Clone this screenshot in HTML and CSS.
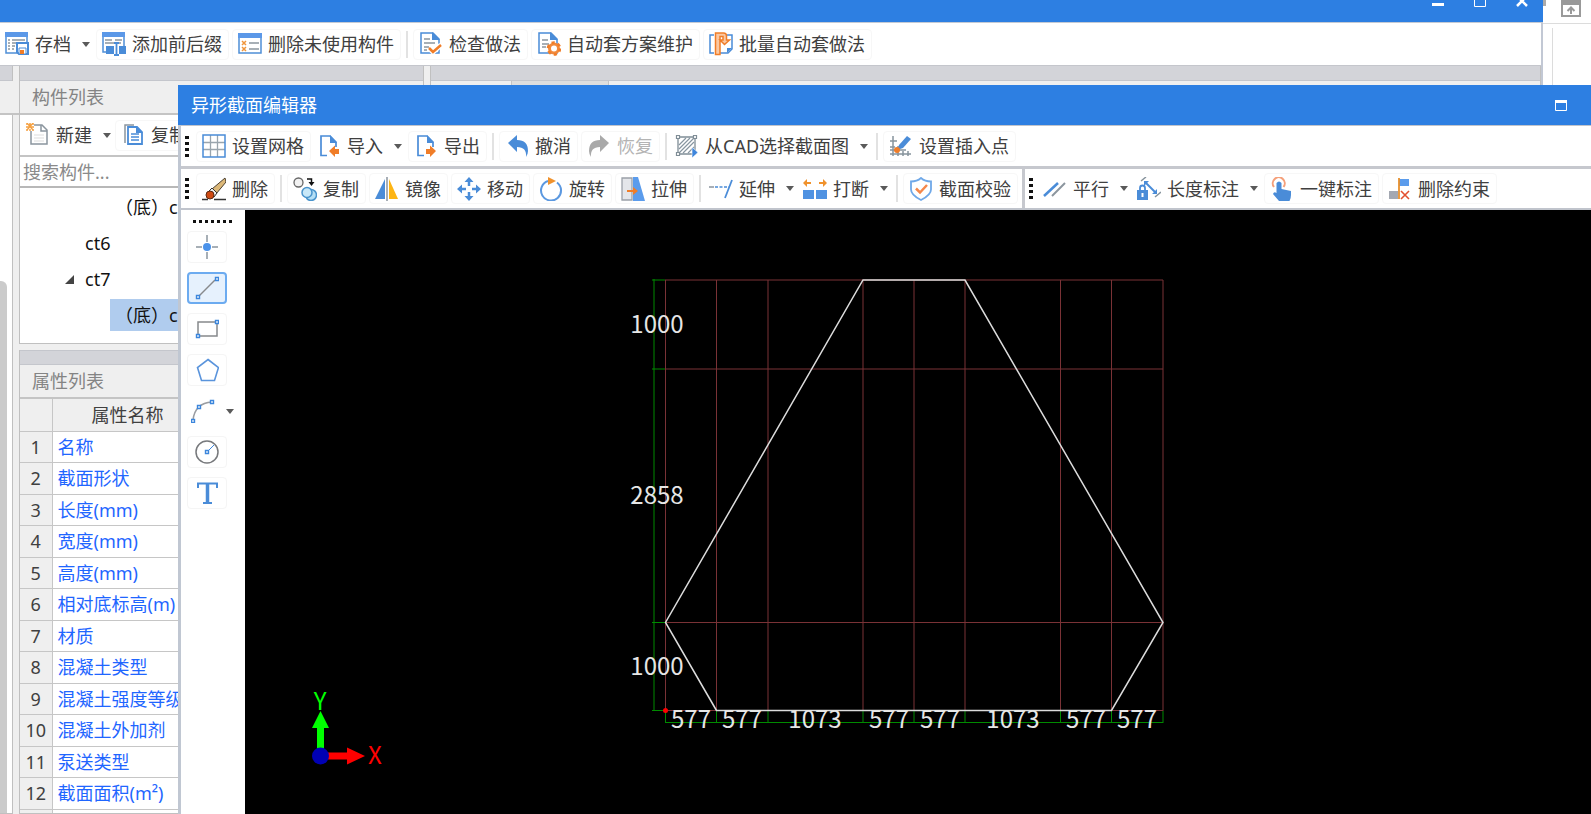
FILE: index.html
```
<!DOCTYPE html>
<html lang="zh-CN">
<head>
<meta charset="utf-8">
<title>异形截面编辑器</title>
<link rel="stylesheet" href="styles.css">
</head>
<body>
<div class="desktop">
  <div class="main-row">
    <main class="manager">
      <header class="manager-title">
        <button class="win-btn" aria-label="最小化"><svg width="12" height="14"><path d="M0 11.500h12" stroke="#fff" stroke-width="3"/></svg></button>
        <button class="win-btn" aria-label="最大化"><svg width="12" height="14"><path d="M.5 0v13.500h11V0" fill="none" stroke="#fff"/></svg></button>
        <button class="win-btn" aria-label="关闭"><svg width="12" height="14"><path d="M1 3l10 10M11 3L1 13" stroke="#fff" stroke-width="2.500"/></svg></button>
      </header>
      <nav class="toolbar manager-toolbar">
        <button class="tool drop"><svg class="icon" viewBox="0 0 24 24"><path d="M1 1h21v20H1z" fill="#fff" stroke="#4f8fd6" stroke-width="1.500"/><path d="M0 0h23v5H0z" fill="#5b98e8"/><path d="M3 8h2M3 11h2M3 14h2M3 17h2M7 8h13M7 11h4M7 14h3M7 17h2" stroke="#8b959e" stroke-width="1.300"/><path d="M12 11h11v11H14l-2-2z" fill="#fff" stroke="#4a8cd8" stroke-width="2"/><path d="M14 16h7v6h-7z" fill="#fff" stroke="#4a8cd8"/><path d="M15 18h4v4h-4z" fill="#f07d28"/></svg><span>存档</span><i class="caret"></i></button>
        <button class="tool"><svg class="icon" viewBox="0 0 24 24"><path d="M1 1h21v19H1z" fill="#fff" stroke="#4f8fd6" stroke-width="1.500"/><path d="M0 0h23v5H0z" fill="#5b98e8"/><path d="M3 8h7M13 8h7M3 11h9M15 11h4" stroke="#8b959e" stroke-width="1.500"/><path d="M4 14h20v8H4z" fill="#4a8cd8"/><path d="M12 11h5v12h-5z" fill="#fff"/><path d="M12 11h5M12 23h5M14.500 11v12" stroke="#4a8cd8" stroke-width="1.800"/></svg><span>添加前后缀</span></button>
        <button class="tool"><svg class="icon" viewBox="0 0 24 24"><path d="M1 2h22v19H1z" fill="#fff" stroke="#4f8fd6" stroke-width="1.500"/><path d="M0 1h24v5H0z" fill="#5b98e8"/><path d="M4 9l4 4M8 9l-4 4M4 15l4 4M8 15l-4 4" stroke="#f0963c" stroke-width="1.500"/><path d="M11 11h10M11 17h10" stroke="#8b959e" stroke-width="1.500"/></svg><span>删除未使用构件</span></button>
        <span class="sep"></span>
        <button class="tool"><svg class="icon" viewBox="0 0 24 24"><path d="M2 1h12l6 6v14H2z" fill="#fff" stroke="#4a8cd8" stroke-width="1.500"/><path d="M13 0v8h8z" fill="#4a8cd8"/><path d="M5 7h6M5 11h11M5 15h5M5 18h3" stroke="#8b959e" stroke-width="1.500"/><path d="M10 16l4 4 8-7" fill="none" stroke="#fff" stroke-width="5"/><path d="M10 16l4 4 8-7" fill="none" stroke="#f07d28" stroke-width="2.500"/></svg><span>检查做法</span></button>
        <button class="tool"><svg class="icon" viewBox="0 0 24 24"><path d="M2 1h12l6 6v14H2z" fill="#fff" stroke="#4a8cd8" stroke-width="1.500"/><path d="M13 0v8h8z" fill="#4a8cd8"/><path d="M5 8h6M5 12h7M5 15h4" stroke="#8b959e" stroke-width="1.500"/><circle cx="17" cy="16.500" r="6" fill="#f28a3c"/><circle cx="17" cy="16.500" r="6" fill="none" stroke="#f07d28" stroke-width="2.600" stroke-dasharray="3.140 3.140"/><circle cx="17" cy="16.500" r="3" fill="#fff"/></svg><span>自动套方案维护</span></button>
        <button class="tool"><svg class="icon" viewBox="0 0 24 24"><path d="M5 3H1v18h4M18 3h5v14l-4 4h-8" fill="none" stroke="#4a8cd8" stroke-width="1.500"/><path d="M18 21v-5h5z" fill="#4a8cd8"/><path d="M6.500 1h8q3 0 3 3v4h3l-5 4.500L11 8h3V4.500h-3V22.500H6.500z" fill="#fbc8a2" stroke="#f07d28" stroke-width="1.500"/></svg><span>批量自动套做法</span></button>
      </nav>
      <div class="panels">
        <section class="panel nav-panel">
          <div class="band"></div>
          <div class="panel-head"></div>
          <div class="nav-body"><div class="scroll-thumb"></div></div>
        </section>
        <div class="component-column">
          <section class="panel">
            <div class="band"></div>
            <h2 class="panel-head">构件列表</h2>
            <div class="toolbar component-toolbar">
              <button class="tool drop"><svg class="icon" viewBox="0 0 24 24"><path d="M5 2h11l5 5v14H5z" fill="#fff" stroke="#8b959e" stroke-width="1.500"/><path d="M15 2v6h6" fill="none" stroke="#8b959e" stroke-width="1.500"/><path d="M8 12h10M8 15h10M8 18h10" stroke="#ddd"/><path d="M0 0h8v8H0z" fill="#fff"/><path d="M0 1h2M3 1h2M6 1h2M0 4h8M0 7h2M3 7h2M6 7h2M1 0l6 7M7 0L1 7" stroke="#f5a040" stroke-width="1.300"/></svg><span>新建</span><i class="caret"></i></button>
              <button class="tool"><svg class="icon" viewBox="0 0 24 24"><path d="M4 20V2h9" fill="none" stroke="#8b959e" stroke-width="1.500"/><path d="M7 4h9l5 5v12H7z" fill="#fff" stroke="#4a8cd8" stroke-width="1.800"/><path d="M15 3v7h7z" fill="#4a8cd8"/><path d="M10 11h8M10 14h8M10 17h8" stroke="#4a8cd8" stroke-width="1.500"/></svg><span>复制</span></button>
            </div>
            <input class="search" type="text" aria-label="搜索构件" placeholder="搜索构件...">
            <ul class="tree">
              <li class="leaf"><span>（底）c</span></li>
              <li class="node">ct6</li>
              <li class="node open">ct7</li>
              <li class="leaf selected"><span>（底）c</span></li>
            </ul>
          </section>
          <section class="panel property-panel">
            <div class="band"></div>
            <h2 class="panel-head">属性列表</h2>
            <table class="props">
              <thead><tr><th class="num"></th><th class="name">属性名称</th><th></th></tr></thead>
              <tbody>
                <tr><th class="num">1</th><td>名称</td><td></td></tr>
                <tr><th class="num">2</th><td>截面形状</td><td></td></tr>
                <tr><th class="num">3</th><td>长度(mm)</td><td></td></tr>
                <tr><th class="num">4</th><td>宽度(mm)</td><td></td></tr>
                <tr><th class="num">5</th><td>高度(mm)</td><td></td></tr>
                <tr><th class="num">6</th><td>相对底标高(m)</td><td></td></tr>
                <tr><th class="num">7</th><td>材质</td><td></td></tr>
                <tr><th class="num">8</th><td>混凝土类型</td><td></td></tr>
                <tr><th class="num">9</th><td>混凝土强度等级</td><td></td></tr>
                <tr><th class="num">10</th><td>混凝土外加剂</td><td></td></tr>
                <tr><th class="num">11</th><td>泵送类型</td><td></td></tr>
                <tr><th class="num">12</th><td>截面面积(m²)</td><td></td></tr>
                <tr><th class="num"></th><td></td><td></td></tr>
              </tbody>
            </table>
          </section>
        </div>
        <section class="panel detail-panel">
          <div class="band"></div>
          <div class="tabs"><span class="tab"></span><span class="tab active"></span></div>
        </section>
      </div>
    </main>
    <aside class="host">
      <div class="host-bar"><span class="host-stub"></span><button class="win-btn" aria-label="收起"><svg width="20" height="17"><path d="M1 0h18v16H1z" fill="#fff" stroke="#9a9a9a" stroke-width="2"/><path d="M0 0h20v5H0z" fill="#999"/><path d="M10 14V8M6.500 11L10 7.500l3.500 3.500" fill="none" stroke="#999" stroke-width="2"/></svg></button></div>
      <div class="host-body"></div>
    </aside>
  </div>

  <section class="editor" role="dialog" aria-label="异形截面编辑器">
    <header class="editor-title"><h1>异形截面编辑器</h1>
      <button class="win-btn" aria-label="最大化"><svg width="12" height="11"><path d="M.5 1v9.500h11V1" fill="none" stroke="#fff"/><path d="M0 1.500h12" stroke="#fff" stroke-width="3"/></svg></button>
    </header>
    <nav class="toolbar editor-toolbar">
      <span class="grip"></span>
      <button class="tool"><svg class="icon" viewBox="0 0 24 24"><path d="M8.500 1v22M15.500 1v22M1 8.500h22M1 15.500h22" stroke="#9aa5ad" stroke-width="1.300"/><path d="M1 1h22v22H1z" fill="none" stroke="#4a8cd8" stroke-width="1.500"/></svg><span>设置网格</span></button>
      <button class="tool drop"><svg class="icon" viewBox="0 0 24 24"><path d="M10 21.500H4V2h9l6 6v5" fill="#fff" stroke="#4a8cd8" stroke-width="1.700"/><path d="M13 1v8h7z" fill="#4a8cd8"/><path d="M12 17l6-5.500V15h4v5h-4v3z" fill="#f07d28"/></svg><span>导入</span><i class="caret"></i></button>
      <button class="tool"><svg class="icon" viewBox="0 0 24 24"><path d="M10 21.500H4V2h9l6 6v5" fill="#fff" stroke="#4a8cd8" stroke-width="1.700"/><path d="M13 1v8h7z" fill="#4a8cd8"/><path d="M22 17l-6-5.500V15h-4v5h4v3z" fill="#f07d28"/></svg><span>导出</span></button>
      <span class="sep"></span>
      <button class="tool"><svg class="icon" viewBox="0 0 24 24"><path d="M3 9l9-8v5q11 0 11 11 0 3-2 6 1-10-9-10v5z" fill="#4a8cd8"/></svg><span>撤消</span></button>
      <button class="tool" disabled><svg class="icon" viewBox="0 0 24 24"><path d="M22 9l-9-8v5Q2 6 2 17q0 3 2 6-1-10 9-10v5z" fill="#a9a9a9"/></svg><span>恢复</span></button>
      <span class="sep"></span>
      <button class="tool drop"><svg class="icon" viewBox="0 0 24 24"><path d="M3 3h17v17H3z" fill="#fff" stroke="#7f8d96" stroke-width="1.300"/><path d="M4 11l7-7M4 15L15 4M4 19L19 4M8 19L19 8M13 19l6-6" stroke="#8795a0" stroke-width="1.200"/><path d="M1.500 1.500h3v3h-3zM18.500 1.500h3v3h-3zM1.500 18.500h3v3h-3z" fill="#fff" stroke="#7f8d96" stroke-width="1.200"/><path d="M17 13v11l6-5.500z" fill="#3f86dc" stroke="#fff" stroke-width=".6"/></svg><span>从CAD选择截面图</span><i class="caret"></i></button>
      <span class="sep"></span>
      <button class="tool"><svg class="icon" viewBox="0 0 24 24"><path d="M4 2v20M9 12v10M1 7h7M1 13h5M1 20h21M14 17v5M19 17v5M1 16h16" stroke="#87949d" stroke-width="1.500"/><path d="M8 16l2-5L18 2l4 3-8 9z" fill="#4a8cd8"/><circle cx="8" cy="16" r="3" fill="#f07d28"/></svg><span>设置插入点</span></button>
    </nav>
    <div class="toolbar-pair">
      <nav class="toolbar">
        <span class="grip"></span>
        <button class="tool"><svg class="icon" viewBox="0 0 24 24"><path d="M0 22.500h6M12 22.500h12" stroke="#333" stroke-width="1.500"/><path d="M10 12L23 1l1 4-10 12z" fill="#dcb878" stroke="#4c4031"/><path d="M7 14l3-3 5 5-3 4z" fill="#eee" stroke="#333"/><circle cx="8" cy="18" r="4" fill="#cf4a12" stroke="#5b2a12"/></svg><span>删除</span></button>
        <span class="sep"></span>
        <button class="tool"><svg class="icon" viewBox="0 0 24 24"><circle cx="5.500" cy="5.500" r="4.500" fill="#f2f2f2" stroke="#666" stroke-width="1.300"/><path d="M14 2h4.500v4" fill="none" stroke="#111" stroke-width="1.500"/><path d="M15.500 5h6l-3 4z" fill="#111"/><circle cx="18" cy="18" r="5.500" fill="#b5dff5" stroke="#4a94cc" stroke-width="1.500"/><circle cx="14" cy="15.500" r="5" fill="#c8e8f8" stroke="#4a94cc" stroke-width="1.500"/></svg><span>复制</span></button>
        <button class="tool"><svg class="icon" viewBox="0 0 24 24"><path d="M10 2v20H0z" fill="#4a8cd8"/><path d="M14 2v20h9z" fill="#fdb515"/><path d="M12 0v24" stroke="#8b959e" stroke-width="1.500"/></svg><span>镜像</span></button>
        <button class="tool"><svg class="icon" viewBox="0 0 24 24"><path d="M12 9V3M12 15v6M9 12H3M15 12h6" stroke="#4a8cd8" stroke-width="2.500"/><path d="M12 0l4.500 5h-9zM12 24l4.500-5h-9zM0 12l5-4.500v9zM24 12l-5-4.500v9z" fill="#4a8cd8"/></svg><span>移动</span></button>
        <button class="tool"><svg class="icon" viewBox="0 0 24 24"><path d="M9 4A10 10 0 1 0 18 5.500" fill="none" stroke="#5b98e0" stroke-width="2"/><path d="M9 0l8 4-8 4z" fill="#f0922c"/></svg><span>旋转</span></button>
        <button class="tool"><svg class="icon" viewBox="0 0 24 24"><path d="M11 1H1v22h10z" fill="#e4e6ea" stroke="#9aa0a8" stroke-width="1.300"/><path d="M12 0h5l7 24H12z" fill="#5b9cec"/><path d="M6 14h8" stroke="#f07d28" stroke-width="2"/><path d="M12 10l5 4-5 4z" fill="#f07d28"/></svg><span>拉伸</span></button>
        <span class="sep"></span>
        <button class="tool drop"><svg class="icon" viewBox="0 0 24 24"><path d="M0 10h5" stroke="#8b959e" stroke-width="1.500"/><path d="M6 10h14" stroke="#4a8cd8" stroke-width="1.500" stroke-dasharray="3 1.500"/><path d="M23 3l-7 18" stroke="#4a8cd8" stroke-width="1.800"/></svg><span>延伸</span><i class="caret"></i></button>
        <button class="tool drop"><svg class="icon" viewBox="0 0 24 24"><path d="M0 13h11v9H0zM13 13h11v9H13z" fill="#4f92e2"/><path d="M2 6h6M16 6h6" stroke="#f0922c" stroke-width="2"/><path d="M0 6l4-4v8zM24 6l-4-4v8z" fill="#f0922c"/></svg><span>打断</span><i class="caret"></i></button>
        <span class="sep"></span>
        <button class="tool"><svg class="icon" viewBox="0 0 24 24"><path d="M12 1q4 3.500 10 3.500v8Q22 18 12 23 2 18 2 12.500v-8Q8 4.500 12 1z" fill="#fff" stroke="#6fa8e8" stroke-width="1.800"/><path d="M7 11.500l4 4L18 8" fill="none" stroke="#f5874a" stroke-width="2.500"/></svg><span>截面校验</span></button>
      </nav>
      <nav class="toolbar">
        <span class="grip"></span>
        <button class="tool drop"><svg class="icon" viewBox="0 0 24 24"><path d="M1 19L15 6" stroke="#4a8cd8" stroke-width="2.500"/><path d="M9 19L22 6" stroke="#8b959e" stroke-width="2"/></svg><span>平行</span><i class="caret"></i></button>
        <button class="tool drop"><svg class="icon" viewBox="0 0 24 24"><path d="M4 4l5-4M18 20l6-5" stroke="#87949d" stroke-width="1.500"/><path d="M9 6l9 9" stroke="#4a8cd8" stroke-width="2"/><path d="M7 4h5L7 9zM20 17h-5l5-5z" fill="#4a8cd8"/><path d="M3 14v-3q0-2.500 2.500-2.500T8 11v3" fill="none" stroke="#4a8cd8" stroke-width="1.800"/><path d="M0 13h11v10H0z" fill="#4a8cd8"/><path d="M5.500 16v4" stroke="#fff" stroke-width="2"/></svg><span>长度标注</span><i class="caret"></i></button>
        <button class="tool"><svg class="icon" viewBox="0 0 24 24"><path d="M4 10a6 6 0 1 1 9.500 0" fill="none" stroke="#f5a07a" stroke-width="2"/><path d="M6.500 6q2.500-3 5 0v6L21 14v4q0 3-1.500 6H9l-6-7q1-3 3.500-1z" fill="#4a8cd8"/></svg><span>一键标注</span></button>
        <button class="tool"><svg class="icon" viewBox="0 0 24 24"><path d="M11 2h10v7H11z" fill="#5b9cec"/><path d="M1 14h9v8H1z" fill="#a3a8b2"/><path d="M11 1v21" stroke="#e8902c" stroke-width="1.800"/><path d="M13 14l8 8M21 14l-8 8" stroke="#e25030" stroke-width="1.600"/></svg><span>删除约束</span></button>
      </nav>
    </div>
    <div class="workspace">
      <nav class="palette">
        <span class="grip-row"></span>
        <button class="shape" aria-label="点"><svg viewBox="0 0 24 24"><path d="M12 0v7M12 17v7M1 12h6M17 12h6" stroke="#8b959e" stroke-width="1.500"/><circle cx="12" cy="12" r="4" fill="#4a92ea"/></svg></button>
        <button class="shape active" aria-label="直线"><svg viewBox="0 0 24 24"><path d="M4 20L20 4" stroke="#87898c" stroke-width="1.500"/><path d="M1.500 19.500h3v3h-3zM20.500 1.500h3v3h-3z" fill="#fff" stroke="#3c86dc" stroke-width="1.400"/></svg></button>
        <button class="shape" aria-label="矩形"><svg viewBox="0 0 24 24"><path d="M3 5h19v14H3z" fill="none" stroke="#87898c" stroke-width="1.500"/><path d="M1.500 17.500h3v3h-3zM20.500 3.500h3v3h-3z" fill="#fff" stroke="#3c86dc" stroke-width="1.400"/></svg></button>
        <button class="shape" aria-label="多边形"><svg viewBox="0 0 24 24"><path d="M13 1.500L23.500 9.500l-4 13H6.500l-4-13z" fill="none" stroke="#5a94dc" stroke-width="1.600"/></svg></button>
        <button class="shape drop" aria-label="弧"><svg viewBox="0 0 24 24"><path d="M2 21Q4 4 21 3" fill="none" stroke="#9a9da2" stroke-width="1.500"/><path d="M.5 20.500h3v3h-3zM6.500 6.500h3v3h-3zM19.500 1.500h3v3h-3z" fill="#fff" stroke="#3c86dc" stroke-width="1.400"/></svg><i class="caret"></i></button>
        <button class="shape" aria-label="圆"><svg viewBox="0 0 24 24"><circle cx="12" cy="12" r="11" fill="none" stroke="#77797c" stroke-width="1.500"/><path d="M13 11l6-6" stroke="#3c86dc"/><path d="M10.500 10.500h3v3h-3z" fill="#fff" stroke="#3c86dc" stroke-width="1.400"/></svg></button>
        <button class="shape" aria-label="文字"><svg viewBox="0 0 24 24"><path d="M3 7V2.500h19V7M8 22h9" fill="none" stroke="#4a8cd8" stroke-width="2"/><path d="M12.500 2v20" stroke="#4a8cd8" stroke-width="3.500"/></svg></button>
      </nav>
      <div class="canvas">
        <svg class="drawing" viewBox="245 210 1346 604" preserveAspectRatio="xMinYMin slice">
          <path class="grid-line" d="M665.500 280v431M716.500 280v431M768 280v431M863 280v431M914 280v431M965 280v431M1060.500 280v431M1111.500 280v431M1163 280v431M665 280h498M665 369h498M665 622.500h498M665 710.500h498"/>
          <path class="dim-line" d="M654 279v432M652 280h13M652 369h13M652 622.500h13M652 710.500h13M665 722.500h498M665.500 711v12M716.500 711v12M768 711v12M863 711v12M914 711v12M965 711v12M1060.500 711v12M1111.500 711v12M1163 711v12"/>
          <path class="outline" d="M716.500 710.500L665.500 622.500 863 280H965L1163 622.500 1111.500 710.500z"/>
          <circle cx="665.500" cy="710.500" r="2.500" fill="#f00"/>
          <g class="dim-text">
            <text x="657" y="333">1000</text><text x="657" y="504">2858</text><text x="657" y="675">1000</text>
            <text x="691" y="728">577</text><text x="742" y="728">577</text><text x="815" y="728">1073</text><text x="889" y="728">577</text><text x="940" y="728">577</text><text x="1013" y="728">1073</text><text x="1086" y="728">577</text><text x="1137" y="728">577</text>
            <text x="320" y="710" fill="#0f0">Y</text><text x="375" y="764" fill="#f00">X</text>
          </g>
          <path d="M317 755v-27h-5l8.500-17 8.500 17h-5v27z" fill="#0f0"/>
          <path d="M320 752.500h27v-5l18 8.500-18 8.500v-5h-27z" fill="#f00"/>
          <circle cx="320.500" cy="756" r="8.500" fill="#0000b4"/>
        </svg>
      </div>
    </div>
  </section>
</div>
</body>
</html>
```
FILE: styles.css
```
* { box-sizing: border-box; }
body {
  margin: 0;
  font: 18px/24px "Noto Sans", "Noto Sans CJK SC", sans-serif;
  color: #404040;
  background: #fff;
}
button, input { font: inherit; color: inherit; }
h1, h2 { margin: 0; font-size: 18px; font-weight: 400; }

.desktop { position: relative; height: 100vh; overflow: hidden; }
.main-row { display: flex; height: 100%; }

/* component manager window */
.manager {
  flex: 1;
  min-width: 0;
  display: flex;
  flex-direction: column;
  background: #efefef;
  border-right: 2px solid #c2c8d4;
}
.manager-title {
  height: 22px;
  flex: none;
  display: flex;
  justify-content: flex-end;
  align-items: flex-start;
  gap: 30px;
  padding: 0 15px;
  margin-right: -2px;
  background: #2d7fe2;
}
.manager-title .win-btn { height: 7px; align-items: flex-end; overflow: hidden; }
.win-btn { display: flex; padding: 0; border: 0; background: none; }
.win-btn svg { flex: none; }

.toolbar { display: flex; align-items: center; gap: 3px; background: #fff; }
.manager-toolbar {
  height: 44px;
  flex: none;
  padding: 0 2px;
  border-top: 1px solid #c4cad4;
  border-bottom: 1px solid #c4c6cc;
}
.tool {
  display: flex;
  align-items: center;
  gap: 6px;
  height: 31px;
  padding: 0 6px 0 5px;
  border: 1px solid #f7f7f7;
  border-radius: 4px;
  background: #fff;
  white-space: nowrap;
}
.tool.drop { padding: 0 2px; border-color: transparent; }
.tool:disabled { color: #b4b4b4; }
.icon { width: 24px; height: 24px; flex: none; }
.caret {
  width: 8px;
  border: 4px solid transparent;
  border-top: 5px solid #5a5a5a;
  border-bottom: 0;
}
.tool .caret { margin-left: 5px; }
.sep { width: 2px; height: 27px; margin: 0 2px; background: #e2e2e2; }

.panels { flex: 1; min-height: 0; display: flex; gap: 6px; }
.panel { border: 1px solid #c0c0c0; border-top: 0; display: flex; flex-direction: column; }
.band { height: 15px; flex: none; background: #d3d4d9; border-bottom: 1px solid #c4c6cc; }
.panel-head {
  height: 34px;
  flex: none;
  padding: 4px 12px;
  color: #848484;
  background: #efefef;
  border-bottom: 2px solid #c4c4c4;
}
.nav-panel { width: 13px; border-left: 0; }
.nav-body { flex: 1; background: #fff; padding-top: 166px; }
.scroll-thumb { width: 7px; height: 100%; background: #cbcbcb; border-radius: 0 6px 0 0; }

.component-column { width: 405px; display: flex; flex-direction: column; gap: 6px; }
.component-toolbar { height: 42px; gap: 1px; padding: 0 3px; border-bottom: 2px solid #c4c4c4; }
.search {
  height: 31px;
  width: 100%;
  padding: 0 3px;
  border: 0;
  border-bottom: 2px solid #b8b8b8;
  background: #fff;
}
.search::placeholder { color: #8a8a8a; opacity: 1; }
.tree { list-style: none; margin: 0; padding: 1px 0 10px; background: #fff; color: #111; }
.tree li { height: 36px; padding: 6px 0 6px 65px; }
.tree .leaf { padding: 2px 0 2px 90px; }
.leaf span { display: block; height: 32px; padding: 4px 5px; }
.leaf.selected span { background: #b0ccee; }
.tree .open { display: flex; align-items: center; gap: 11px; padding-left: 45px; }
.tree .open::before {
  content: "";
  border-left: 9px solid transparent;
  border-bottom: 9px solid #444;
}

.property-panel { flex: 1; min-height: 0; overflow: hidden; }
.property-panel .band { border-top: 1px solid #c4c6cc; }
.props { width: 100%; border-collapse: collapse; table-layout: fixed; background: #fff; }
.props th, .props td {
  height: 31px;
  padding: 0 5px;
  line-height: 24px;
  border-right: 1px solid #c6c6c6;
  border-bottom: 1px solid #c6c6c6;
  font-weight: 400;
  text-align: left;
  white-space: nowrap;
}
.props thead th, .props tbody tr:nth-child(even) > * { height: 32px; }
.props th { background: #efefef; }
.props td { color: #1f66ff; }
.props .num { width: 32px; padding: 0; text-align: center; }
.props .name { width: 151px; text-align: center; }

.detail-panel { flex: 1; }
.tabs { display: flex; height: 32px; background: #efefef; }
.tab { width: 80px; }
.tab.active { width: 98px; background: #dedede; border: 1px solid #c4c4c4; border-width: 0 1px; }

/* application behind the manager */
.host { width: 48px; background: #fff; }
.host-bar {
  height: 24px;
  display: flex;
  align-items: flex-start;
  gap: 15px;
  border-bottom: 1px solid #dcdcdc;
}
.host-stub { width: 3px; height: 6px; background: #aaa; }
.host-body { height: 100%; margin: 4px 0 0 9px; border-left: 1px solid #dcdcdc; }

/* section editor window */
.editor {
  position: absolute;
  left: 178px;
  top: 85px;
  right: 0;
  bottom: 0;
  display: flex;
  flex-direction: column;
  background: #fff;
  border-left: 3px solid #c0c7d2;
}
.editor-title {
  height: 40px;
  flex: none;
  display: flex;
  align-items: center;
  justify-content: space-between;
  margin-left: -3px;
  padding: 0 24px 0 13px;
  color: #fff;
  background: #2d7fe2;
}
.editor .toolbar { height: 41px; padding-left: 4px; }
.editor-toolbar { flex: none; border-top: 1px solid #c0c4cc; }
.toolbar-pair {
  flex: none;
  display: flex;
  gap: 3px;
  border-top: 3px solid #c6c8ce;
  border-bottom: 2px solid #c0c4cc;
  background: #c6c8ce;
}
.toolbar-pair .toolbar { height: 39px; padding-right: 4px; }
.toolbar-pair .toolbar:last-child { flex: 1; }
.grip {
  width: 4px;
  height: 21px;
  margin-right: 4px;
  background: repeating-linear-gradient(#111 0 3px, transparent 3px 6px);
}

.workspace { flex: 1; min-height: 0; display: flex; }
.palette {
  width: 64px;
  flex: none;
  display: flex;
  flex-direction: column;
  align-items: flex-start;
  gap: 9px;
  padding: 10px 6px;
}
.grip-row {
  width: 39px;
  height: 3px;
  margin-left: 6px;
  margin-bottom: -1px;
  background: repeating-linear-gradient(90deg, #111 0 3px, transparent 3px 6px);
}
.shape {
  display: flex;
  align-items: center;
  justify-content: center;
  width: 40px;
  height: 32px;
  padding: 0;
  border: 1px solid #f5f5f5;
  border-radius: 4px;
  background: #fff;
}
.shape svg { width: 24px; height: 24px; flex: none; }
.shape.active { background: #e6f1fd; border: 2px solid #6cabf0; }
.shape.drop { width: 48px; gap: 11px; justify-content: flex-end; border-color: transparent; }
.canvas { flex: 1; min-width: 0; background: #000; }
.drawing { display: block; width: 100%; height: 100%; }
.grid-line { stroke: #7a3236; fill: none; }
.dim-line { stroke: #008a00; fill: none; }
.outline { stroke: #dcdcdc; stroke-width: 1.500; fill: none; }
.dim-text { font: 24px "Noto Sans CJK SC", sans-serif; fill: #e6e6e6; text-anchor: middle; }
```
